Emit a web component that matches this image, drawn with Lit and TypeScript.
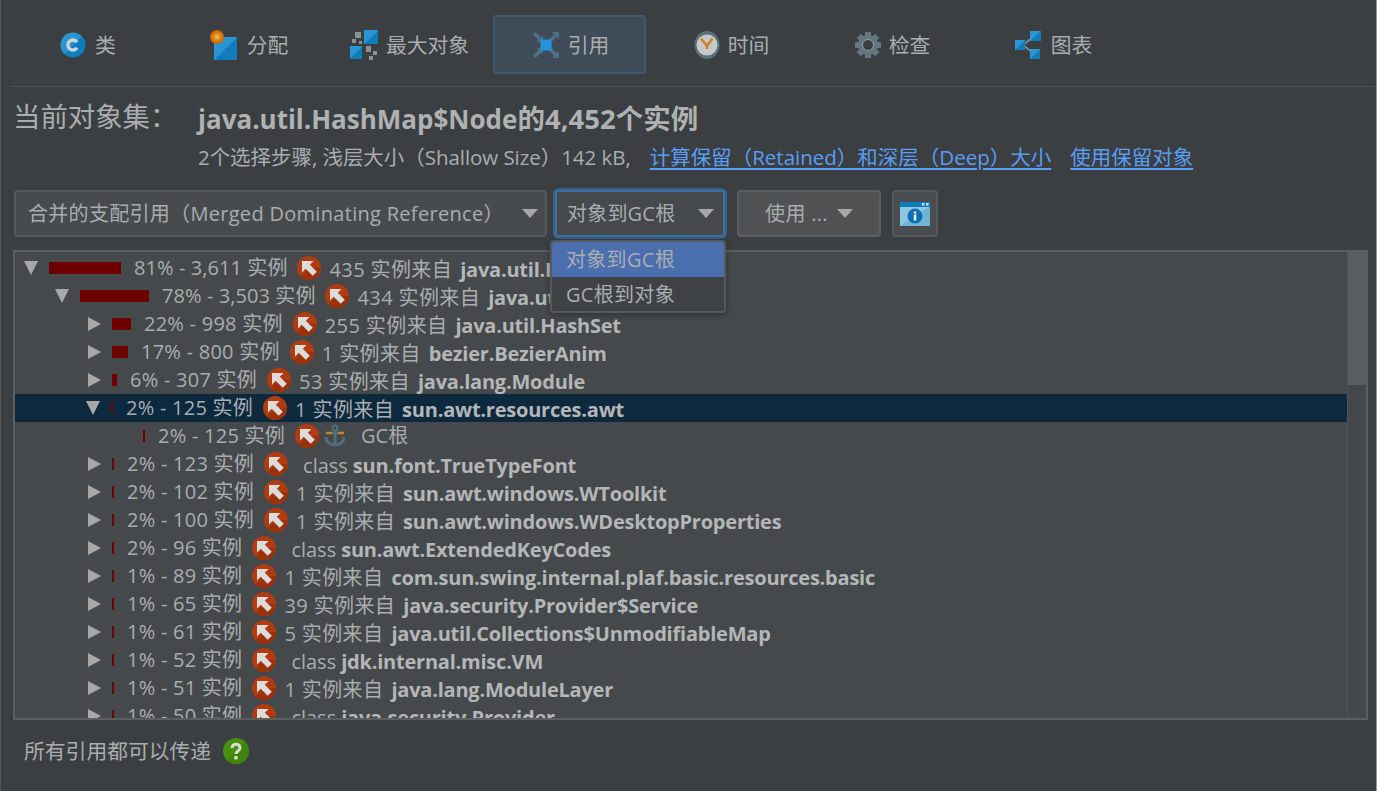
import { LitElement, html, css, svg } from "lit";
import { customElement } from "lit/decorators.js";

const defs = svg`
  <linearGradient id="bl" x1="0" y1="0" x2="1" y2="1"><stop offset="0" stop-color="#2a9ad6"/><stop offset=".5" stop-color="#2a93cf"/><stop offset=".5" stop-color="#0f7cbc"/><stop offset="1" stop-color="#0f7cbc"/></linearGradient>`;

const tabIcons: Record<string, unknown> = {
  cls: html`<svg width="28" height="28" viewBox="0 0 28 28"><defs>${defs}</defs><circle cx="14" cy="14" r="12.5" fill="url(#bl)"/><path d="M18 11.200a5 5 0 1 0 0 5.600" fill="none" stroke="#ccd3d8" stroke-width="3.400"/></svg>`,
  alloc: html`<svg width="30" height="30" viewBox="0 0 30 30"><defs>${defs}<radialGradient id="og"><stop offset="0" stop-color="#e8c45a"/><stop offset=".5" stop-color="#dd8a12"/><stop offset="1" stop-color="#c85c08"/></radialGradient></defs><rect x="5" y="7" width="23" height="23" fill="url(#bl)"/><circle cx="8" cy="7" r="7" fill="url(#og)"/></svg>`,
  big: html`<svg width="28" height="30" viewBox="0 0 28 30"><defs>${defs}</defs><rect x="14" y="0" width="14" height="14" fill="url(#bl)"/><rect x="0" y="16" width="12" height="13" fill="url(#bl)"/><g fill="#8b9296"><rect x="5" y="2" width="6" height="6"/><rect x="2" y="9" width="4" height="4"/><rect x="9" y="11" width="3" height="3"/><rect x="16" y="16" width="5" height="6"/><rect x="23" y="21" width="4" height="4"/><rect x="19" y="26" width="4" height="4"/></g></svg>`,
  ref: html`<svg width="28" height="28" viewBox="0 0 28 28"><defs>${defs}</defs><g fill="#4f7186"><path d="M1 3.500 3.500 1 9 6.500 11 4.500V11H4.500L6.500 9z"/><path d="M1 24.500 3.500 27 9 21.500 11 23.500V17H4.500L6.500 19z"/><path d="M27 1v7l-2.200-2.200L19.500 11 17 8.500 22.200 3.200 20 1z"/><path d="M27 27v-7l-2.200 2.200L19.500 17 17 19.500l5.200 5.300L20 27z"/></g><rect x="8.500" y="8.500" width="11" height="11" fill="#1f95dd"/></svg>`,
  time: html`<svg width="26" height="28" viewBox="0 0 26 28"><ellipse cx="13" cy="14" rx="12.500" ry="14" fill="#5c707b"/><circle cx="13" cy="14" r="10.500" fill="#c6c9ca"/><path d="M7 7.500l6 7.500 5.500-7.500M13 15v3" fill="none" stroke="#d4801c" stroke-width="2.400"/></svg>`,
  gear: html`<svg width="26" height="26" viewBox="0 0 26 26"><g fill="#637681"><circle cx="13" cy="13" r="10"/><rect x="10" y="0" width="6" height="26"/><rect x="10" y="0" width="6" height="26" transform="rotate(45 13 13)"/><rect x="10" y="0" width="6" height="26" transform="rotate(90 13 13)"/><rect x="10" y="0" width="6" height="26" transform="rotate(135 13 13)"/></g><circle cx="13" cy="13" r="5.500" fill="#3c3f41" stroke="#8fa0a9" stroke-width="1"/></svg>`,
  graph: html`<svg width="28" height="28" viewBox="0 0 28 28"><defs>${defs}</defs><path d="M8 14 L18 6 M8 14 L18 22" stroke="#7a8a94" stroke-width="2" fill="none"/><rect x="0" y="9" width="10" height="10" fill="url(#bl)"/><rect x="15" y="0" width="11" height="10" fill="url(#bl)"/><rect x="15" y="18" width="10" height="10" fill="url(#bl)"/></svg>`,
};

const tabs = [
  ["cls", "类"], ["alloc", "分配"], ["big", "最大对象"], ["ref", "引用"],
  ["time", "时间"], ["gear", "检查"], ["graph", "图表"],
];

type Row = { d: number; a: "d" | "r" | ""; bar: number; pct: string; pre?: string; b?: string; root?: boolean; sel?: boolean };
const rows: Row[] = [
  { d: 0, a: "d", bar: 72, pct: "81% - 3,611 实例", pre: "435 实例来自", b: "java.util.HashMap" },
  { d: 1, a: "d", bar: 69, pct: "78% - 3,503 实例", pre: "434 实例来自", b: "java.util.HashMap" },
  { d: 2, a: "r", bar: 19, pct: "22% - 998 实例", pre: "255 实例来自", b: "java.util.HashSet" },
  { d: 2, a: "r", bar: 16, pct: "17% - 800 实例", pre: "1 实例来自", b: "bezier.BezierAnim" },
  { d: 2, a: "r", bar: 5, pct: "6% - 307 实例", pre: "53 实例来自", b: "java.lang.Module" },
  { d: 2, a: "d", bar: 2, pct: "2% - 125 实例", pre: "1 实例来自", b: "sun.awt.resources.awt", sel: true },
  { d: 3, a: "", bar: 2, pct: "2% - 125 实例", root: true },
  { d: 2, a: "r", bar: 2, pct: "2% - 123 实例", pre: "class", b: "sun.font.TrueTypeFont" },
  { d: 2, a: "r", bar: 2, pct: "2% - 102 实例", pre: "1 实例来自", b: "sun.awt.windows.WToolkit" },
  { d: 2, a: "r", bar: 2, pct: "2% - 100 实例", pre: "1 实例来自", b: "sun.awt.windows.WDesktopProperties" },
  { d: 2, a: "r", bar: 2, pct: "2% - 96 实例", pre: "class", b: "sun.awt.ExtendedKeyCodes" },
  { d: 2, a: "r", bar: 2, pct: "1% - 89 实例", pre: "1 实例来自", b: "com.sun.swing.internal.plaf.basic.resources.basic" },
  { d: 2, a: "r", bar: 2, pct: "1% - 65 实例", pre: "39 实例来自", b: "java.security.Provider$Service" },
  { d: 2, a: "r", bar: 2, pct: "1% - 61 实例", pre: "5 实例来自", b: "java.util.Collections$UnmodifiableMap" },
  { d: 2, a: "r", bar: 2, pct: "1% - 52 实例", pre: "class", b: "jdk.internal.misc.VM" },
  { d: 2, a: "r", bar: 2, pct: "1% - 51 实例", pre: "1 实例来自", b: "java.lang.ModuleLayer" },
  { d: 2, a: "r", bar: 2, pct: "1% - 50 实例", pre: "class", b: "java.security.Provider" },
];
const pads = [9, 40, 71, 102];

const arrowUp = html`<svg class="up" width="24" height="24" viewBox="0 0 24 24"><circle cx="12" cy="12" r="12" fill="#b03c10"/><path d="M12 12 3.500 20.500A12 12 0 0 0 24 12z" fill="#9a320c"/><path d="M5 5h11.500l-3.700 3.700 7 7-4.100 4.100-7-7L5 16.500z" fill="#dddcdb"/></svg>`;
const anchor = html`<svg class="anc" width="24" height="24" viewBox="0 0 24 24"><path d="M12 6v15M3 13c0 5 4 8 9 8s9-3 9-8" fill="none" stroke="#536d7c" stroke-width="3"/><circle cx="12" cy="4" r="2.500" fill="none" stroke="#536d7c" stroke-width="2"/><path d="M3 9h6M15 9h6" stroke="#c8852f" stroke-width="2.500"/><path d="M9 9h6" stroke="#536d7c" stroke-width="2.500"/></svg>`;

@customElement("app-root")
export class AppRoot extends LitElement {
  static styles = css`
    :host { display: block; width: 1377px; height: 791px; overflow: hidden; background: #3c3f41; color: #a9adb0;
      font-family: "Open Sans", "Noto Sans CJK SC", sans-serif; font-size: 20px; line-height: 28px; box-sizing: border-box; border-left: 1px solid #55585a; border-right: 1px solid #8a9aa3; }
    .page { display: flex; flex-direction: column; position: relative; height: 791px; }
    .tabs { display: flex; height: 86px; padding-left: 5px; box-sizing: border-box; font-size: 20.800px; }
    .tabbar-rule { height: 1px; background: #4f5254; margin-left: 9px; margin-right: 1px; }
    .tab { width: 161px; flex: none; display: flex; box-sizing: border-box; padding: 15px 4px 12px; }
    .tab-in { flex: 1; display: flex; align-items: center; justify-content: center; gap: 8px; border: 1px solid transparent; border-radius: 3px; padding-left: 2px; }
    .tab-in span { padding-top: 1px; }
    .tab.on .tab-in { background: #3f4c57; border-color: #3e5a72; border-width: 2px; }
    .tab svg { display: block; }
    .head { display: flex; padding: 13px 0 0 12px; font-size: 26px; line-height: 34px; white-space: nowrap; }
    .head .lbl { width: 185px; font-size: 27.400px; }
    .head b { font-weight: 700; color: #afb1b3; padding-top: 2px; }
    .head b span { font-size: 27.500px; }
    .sub { padding: 6px 0 0 197px; font-size: 20.500px; line-height: 30px; display: flex; white-space: nowrap; }
    .sub span { letter-spacing: -.05px; }
    .sub a { color: #589df6; text-decoration: underline; text-underline-offset: 3px; }
    .sub a.l1 { margin-left: 19px; }
    .sub a.l2 { margin-left: 19px; }
    .tools { display: flex; padding: 18px 0 0 13px; height: 47px; box-sizing: content-box; gap: 8px; position: relative; }
    .ctl { height: 47px; box-sizing: border-box; border: 2px solid #56595b; border-radius: 4px; background: #484b4e; display: flex; align-items: center; white-space: nowrap; }
    .c1 { width: 533px; padding: 0 7px 0 12px; justify-content: space-between; letter-spacing: .3px; }
    .c2 { width: 170px; padding: 0 9px 0 10px; justify-content: space-between; background: #46494b; border-color: #3f70a0; box-shadow: 0 0 0 2px #38618a; letter-spacing: .2px; }
    .c3 { width: 144px; margin-left: 4px; justify-content: center; gap: 9px; background: #4f5153; border-color: #5c5f61; letter-spacing: .3px; }
    .c4 { width: 46px; margin-left: 3px; justify-content: center; background: #4a4d4f; }
    .caret { width: 0; height: 0; border-left: 8px solid transparent; border-right: 8px solid transparent; border-top: 9px solid #a8a8a8; display: block; flex: none; }
    .tree { margin: 13px 8px 0 12px; height: 470px; box-sizing: border-box; border: 2px solid #5c5f61; background: #46494b; display: flex; overflow: hidden; position: relative; }
    .list { flex: 1; padding-top: 2px; overflow: hidden; }
    .sb { width: 19px; flex: none; box-sizing: border-box; background: #45484a; border-left: 1px solid #505356; }
    .sb div { height: 133px; background: #595d5f; }
    .row { height: 28px; display: flex; align-items: center; white-space: nowrap; }
    .row.sel { background: #0d293e; }
    .pct { letter-spacing: .25px; }
    .row.top .pct { letter-spacing: .08px; }
    .ar { flex: none; margin-right: 11px; width: 0; height: 0; }
    .ar.d { border-left: 7.500px solid transparent; border-right: 7.500px solid transparent; border-top: 14px solid #a8a8a8; }
    .ar.r { margin-left: 2px; border-top: 7.500px solid transparent; border-bottom: 7.500px solid transparent; border-left: 13px solid #a8a8a8; }
    .ar.n { width: 26px; margin-right: 0; }
    .bar { flex: none; height: 12px; background: #6e0000; margin-right: 13px; }
    .up { flex: none; margin-left: 10px; }
    .anc { flex: none; margin-left: 4px; }
    .pre { margin-left: 8px; padding-top: 4px; letter-spacing: .4px; }
    .pre.cl { margin-left: 15px; letter-spacing: 0; }
    .root { margin-left: 14px; }
    .row b { font-weight: 700; color: #b4b6b8; margin-left: 8px; padding-top: 4px; letter-spacing: -.22px; }
    .pre.cl + b { margin-left: 5px; }
    .foot { padding: 16px 0 0 23px; display: flex; align-items: center; gap: 12px; height: 30px; font-size: 20.800px; }
    .menu { position: absolute; left: 549px; top: 240px; width: 176px; height: 73px; box-sizing: border-box; background: #3f4244; border: 2px solid #56595b; border-radius: 4px; box-shadow: 0 2px 6px #0005; overflow: hidden; z-index: 2; letter-spacing: .3px; }
    .menu div { height: 35px; padding-left: 14px; line-height: 35px; }
    .menu .on { background: #4b6eaf; }
  `;

  render() {
    return html`<div class="page">
      <div class="tabs">
        ${tabs.map(([k, t], i) => html`<div class="tab ${i === 3 ? "on" : ""}"><div class="tab-in">${tabIcons[k]}<span>${t}</span></div></div>`)}
      </div>
      <div class="tabbar-rule"></div>
      <div class="head"><span class="lbl">当前对象集：</span><b>java.util.HashMap$Node<span>的4,452个实例</span></b></div>
      <div class="sub"><span>2个选择步骤, 浅层大小（Shallow Size）142 kB,</span><a class="l1">计算保留（Retained）和深层（Deep）大小</a><a class="l2">使用保留对象</a></div>
      <div class="tools">
        <div class="ctl c1"><span>合并的支配引用（Merged Dominating Reference）</span><i class="caret"></i></div>
        <div class="ctl c2"><span>对象到GC根</span><i class="caret"></i></div>
        <div class="ctl c3"><span>使用 ...</span><i class="caret"></i></div>
        <div class="ctl c4"><svg width="30" height="24" viewBox="0 0 30 24"><rect y="0" width="30" height="24" fill="#8fc7e2"/><path d="M0 24 30 4v20z" fill="#6fb3d6"/><rect width="30" height="5" fill="#0f7cbc"/><rect x="22" y="1" width="2.500" height="2.500" fill="#cde"/><rect x="26" y="1" width="2.500" height="2.500" fill="#cde"/><circle cx="15" cy="14" r="7.500" fill="#0f6fb2"/><rect x="13.800" y="12.500" width="2.500" height="6" fill="#e8f2f8"/><rect x="13.800" y="9.500" width="2.500" height="2" fill="#e8f2f8"/></svg></div>
      </div>
      <div class="tree">
        <div class="list">
          ${rows.map((r) => html`<div class="row ${r.sel ? "sel" : ""} ${r.d < 2 ? "top" : ""}" style="padding-left:${pads[r.d]}px">
            <i class="ar ${r.a || "n"}"></i><i class="bar" style="width:${r.bar}px"></i><span class="pct">${r.pct}</span>${arrowUp}
            ${r.root
              ? html`${anchor}<span class="root">GC根</span>`
              : html`<span class="pre ${r.pre === "class" ? "cl" : ""}">${r.pre}</span><b>${r.b}</b>`}
          </div>`)}
        </div>
        <div class="sb"><div></div></div>
      </div>
      <div class="foot"><span>所有引用都可以传递</span><svg width="26" height="26" viewBox="0 0 26 26"><circle cx="13" cy="13" r="13" fill="#46900f"/><path d="M26 13A13 13 0 0 1 4 22L22 4a13 13 0 0 1 4 9z" fill="#3f860c"/><path d="M9 10c0-5 8-5 8 0 0 3-4 3-4 6" fill="none" stroke="#d8ddd0" stroke-width="3"/><rect x="11.300" y="18" width="3.400" height="3.400" fill="#d8ddd0"/></svg></div>
      <div class="menu"><div class="on">对象到GC根</div><div>GC根到对象</div></div>
    </div>`;
  }
}
